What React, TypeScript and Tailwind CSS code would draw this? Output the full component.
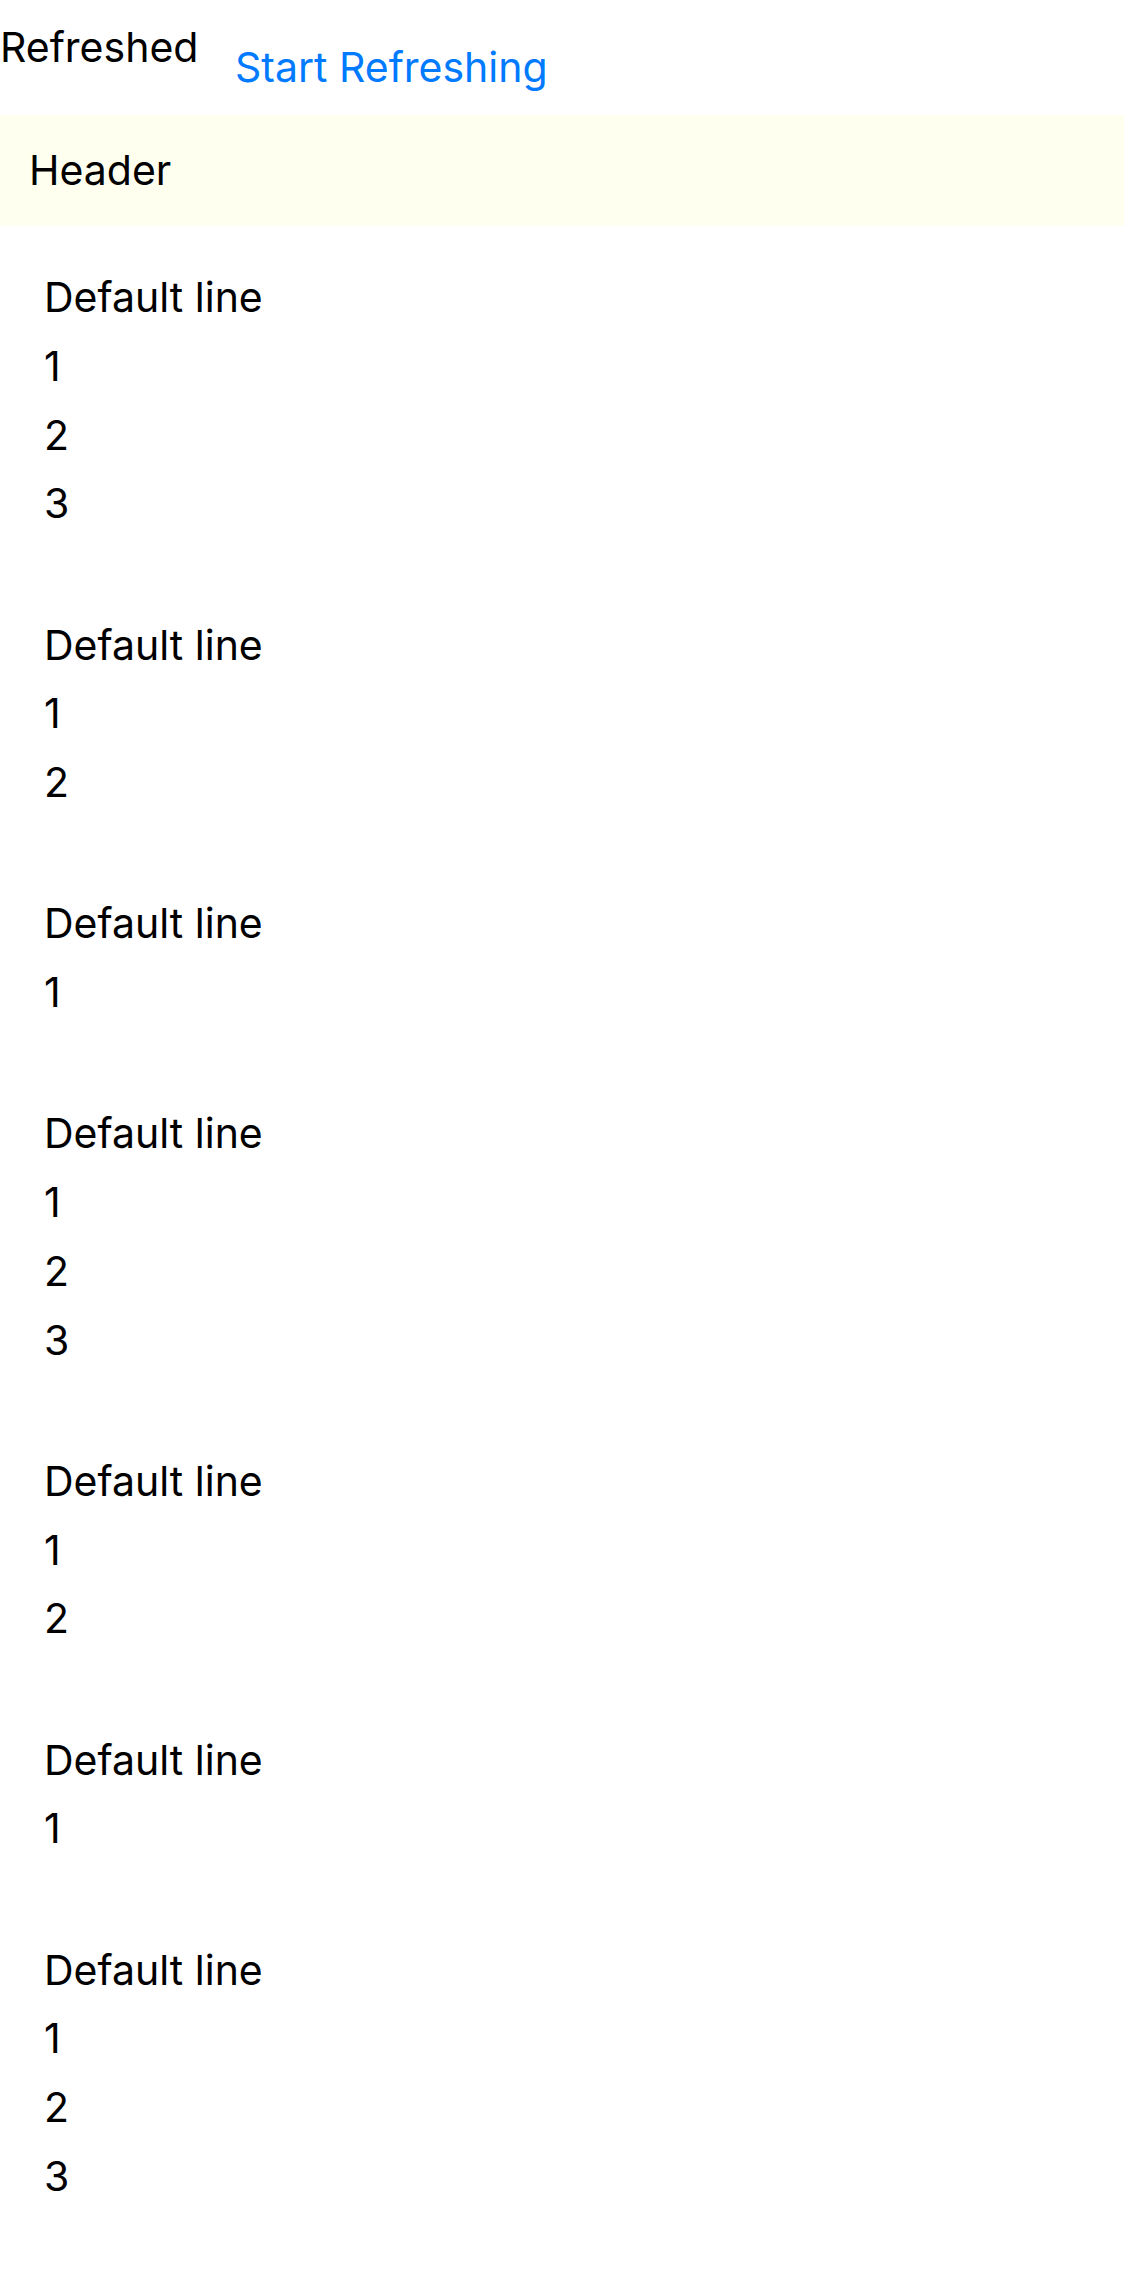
import React from "react";

const groups: number[] = [3, 2, 1, 3, 2, 1, 3];

function Group({ count }: { count: number }) {
  const items = Array.from({ length: count }, (_, i) => String(i + 1));
  return (
    <div className="flex flex-col">
      <div className="h-[68.75px] leading-[68.75px]">Default line</div>
      {items.map((n) => (
        <div key={n} className="h-[68.75px] leading-[68.75px]">
          {n}
        </div>
      ))}
    </div>
  );
}

export default function App() {
  return (
    <div className="min-h-[2286px] w-full bg-white text-[41px] text-black font-['Inter',sans-serif]">
      <div className="flex h-[115px] items-start">
        <div className="mt-[22px] w-[235px] shrink-0 leading-[50px]">Refreshed</div>
        <button type="button" className="mt-[42px] leading-[50px] text-[#007aff]">
          Start Refreshing
        </button>
      </div>
      <div className="h-[111px] bg-[#fffff0] px-[29px] py-[30px] leading-[50px]">Header</div>
      <div className="flex flex-col gap-[72.5px] pt-[37px] pl-[44px]">
        {groups.map((c, i) => (
          <Group key={i} count={c} />
        ))}
      </div>
    </div>
  );
}
